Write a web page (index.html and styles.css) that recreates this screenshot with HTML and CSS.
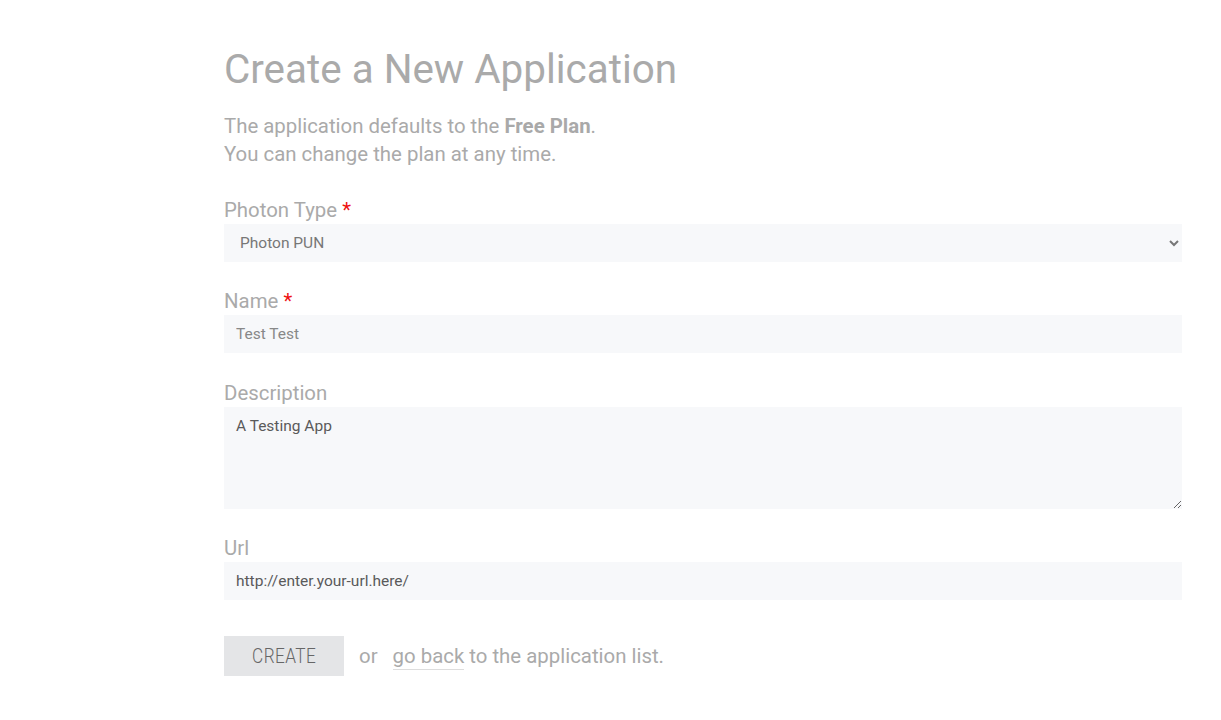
FILE: index.html
```html
<!DOCTYPE html>
<html>
<head>
<meta charset="utf-8">
<link rel="stylesheet" href="styles.css">
</head>
<body>
<main class="page">
  <h1 class="title">Create a New Application</h1>
  <p class="intro">The application defaults to the <strong>Free Plan</strong>.<br>You can change the plan at any time.</p>
  <form class="form">
    <div class="field">
      <label class="label">Photon Type <span class="req">*</span></label>
      <select class="control select"><option>Photon PUN</option></select>
    </div>
    <div class="field field-wide">
      <label class="label">Name <span class="req">*</span></label>
      <input class="control input name" type="text" value="Test Test">
    </div>
    <div class="field">
      <label class="label">Description</label>
      <textarea class="control textarea">A Testing App</textarea>
    </div>
    <div class="field">
      <label class="label">Url</label>
      <input class="control input url" type="text" value="http://enter.your-url.here/">
    </div>
    <div class="actions">
      <button type="button" class="btn"><span class="btn-text">CREATE</span></button>
      <span class="or">or</span>
      <span class="back"><a class="link" href="#">go back</a> to the application list.</span>
    </div>
  </form>
</main>
</body>
</html>
```
FILE: styles.css
```css
* { box-sizing: border-box; }
html, body { margin: 0; padding: 0; background: #fff; }
body { font-family: Roboto, "Liberation Sans", sans-serif; color: #aaa; }
.page { width: 958px; margin-left: 224px; padding-top: 46px; }
.title { margin: 0; font-size: 40.4px; line-height: 48px; font-weight: 400; color: #aaaaaa; }
.intro { margin: 18px 0 0; font-size: 20.4px; line-height: 28px; color: #aaaaaa; }
.intro strong { font-weight: 700; color: #a9a9a9; }
.form { margin-top: 28px; display: flex; flex-direction: column; }
.field { display: flex; flex-direction: column; margin-bottom: 25px; }
.field-wide { margin-bottom: 26px; }
.label { font-size: 20.4px; line-height: 28px; color: #aaaaaa; }
.req { color: #ee1111; }
.control { border: none; outline: none; background: #f7f8fa; font-family: Roboto, "Liberation Sans", sans-serif; font-size: 15.5px; width: 100%; margin: 0; }
.select { height: 38px; padding: 0 8px 0 12px; color: #777; }
.input { height: 38px; padding: 0 12px; }
.name { color: #888; }
.url { color: #5a5a5a; }
.textarea { height: 102px; padding: 10px 12px; color: #5a5a5a; line-height: 18px; resize: vertical; display: block; }
.actions { display: flex; align-items: center; margin-top: 11px; font-size: 20.4px; }
.btn { width: 120px; height: 40px; border: none; background: #e4e5e7; color: #666; font-family: Roboto, "Liberation Sans", sans-serif; font-size: 21px; font-weight: 300; padding: 0; display: flex; align-items: center; justify-content: center; }
.btn-text { display: inline-block; transform: scaleX(0.82); letter-spacing: 0.5px; }
.or { margin-left: 15px; color: #aaa; }
.back { margin-left: 15px; color: #aaa; }
.link { color: #aaa; text-decoration: none; border-bottom: 1px solid #dddddd; padding-bottom: 1px; }
```
